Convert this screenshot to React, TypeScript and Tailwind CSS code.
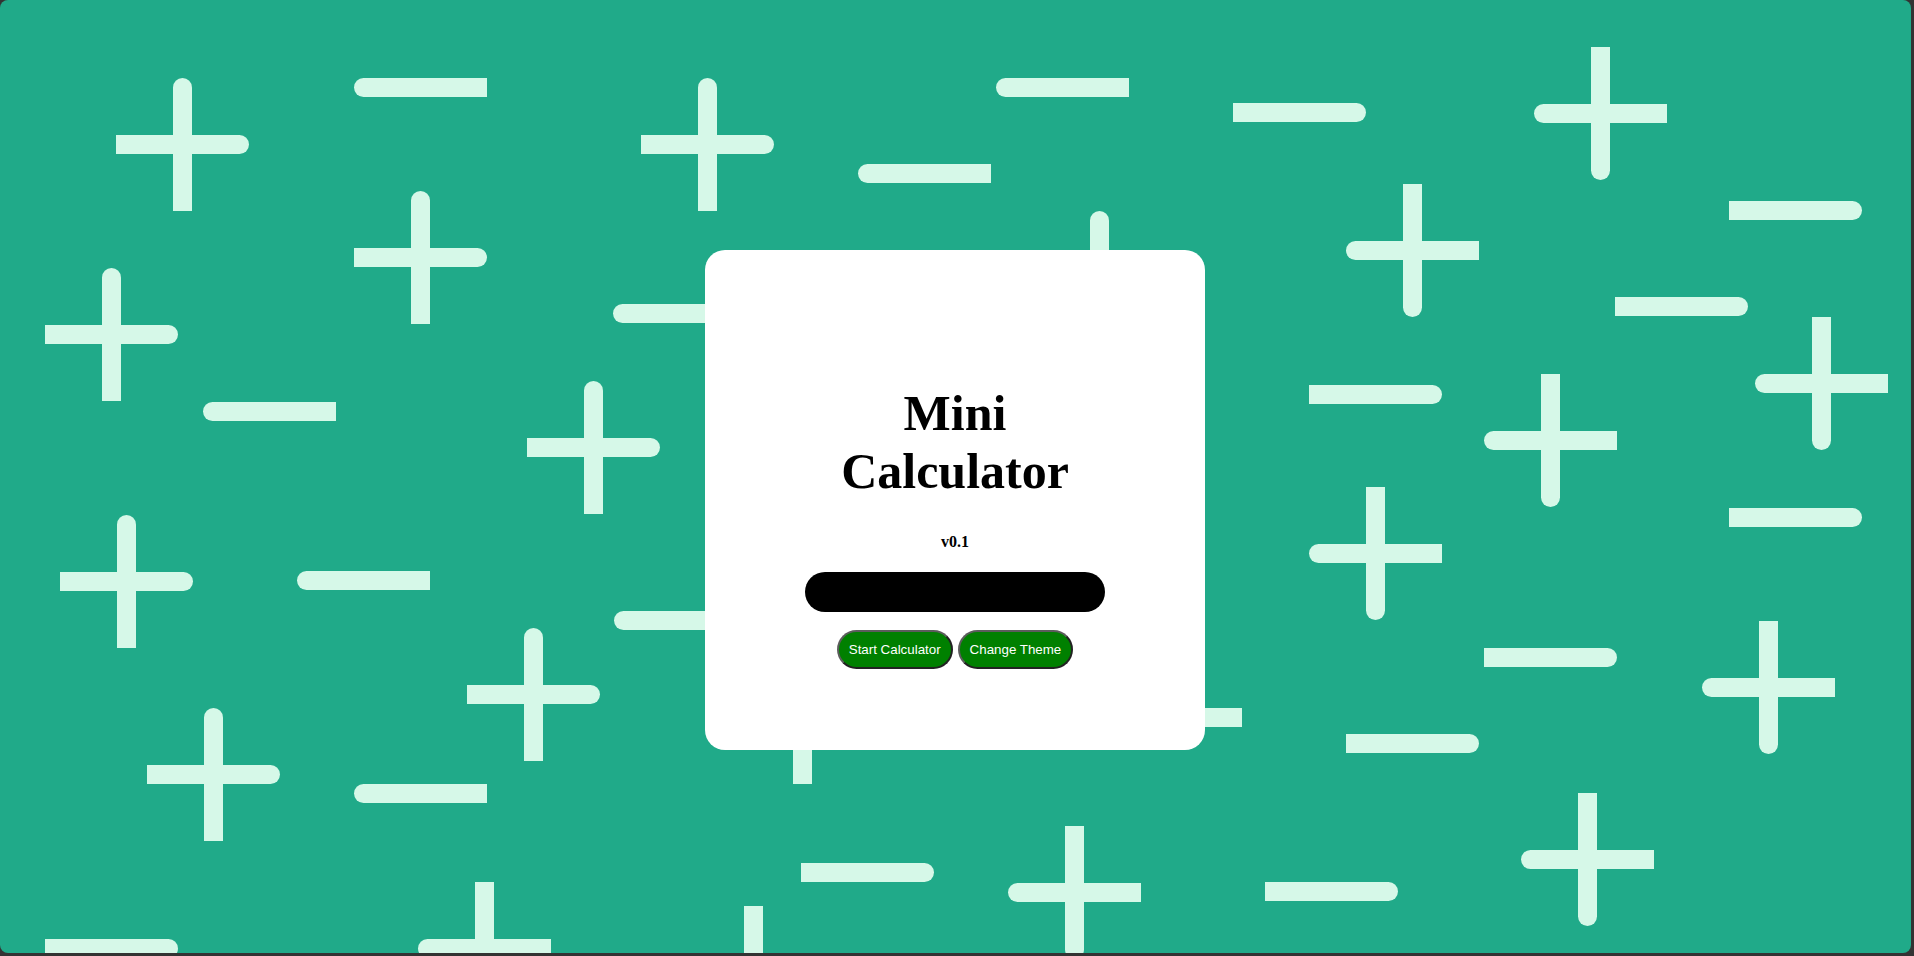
import React from 'react';

type Pt = [number, number];

// symbol positions (top-left of each glyph box), two orientations of the pattern
const plusA: Pt[] = [[116, 78], [354, 191], [45, 268], [641, 78], [1033, 211], [527, 381], [60, 515], [467, 628], [147, 708], [736, 651]];
const minusA: Pt[] = [[354, 78], [203, 402], [996, 78], [858, 164], [613, 304], [297, 571], [614, 611], [354, 784], [1109, 708]];
const plusB: Pt[] = [[418, 882], [1008, 826], [687, 906], [1534, 47], [1346, 184], [1484, 374], [1755, 317], [1309, 487], [1702, 621], [1521, 793]];
const minusB: Pt[] = [[45, 939], [801, 863], [1265, 882], [1233, 103], [1729, 201], [1615, 297], [1309, 385], [1729, 508], [1484, 648], [1346, 734]];

const S = 133;
const T = 19;
const R = 9.5;

const Pattern = () => (
  <svg className="absolute inset-0" width="1911" height="953" viewBox="0 0 1911 953" fill="#d6f8e8">
    {plusA.map(([x, y], i) => (
      <g key={'pa' + i}>
        <rect x={x + 57} y={y} width={T} height={S} rx={R} />
        <rect x={x + 57} y={y + 66} width={T} height={67} />
        <rect x={x} y={y + 57} width={S} height={T} rx={R} />
        <rect x={x} y={y + 57} width={67} height={T} />
      </g>
    ))}
    {plusB.map(([x, y], i) => (
      <g key={'pb' + i}>
        <rect x={x + 57} y={y} width={T} height={S} rx={R} />
        <rect x={x + 57} y={y} width={T} height={67} />
        <rect x={x} y={y + 57} width={S} height={T} rx={R} />
        <rect x={x + 66} y={y + 57} width={67} height={T} />
      </g>
    ))}
    {minusA.map(([x, y], i) => (
      <g key={'ma' + i}>
        <rect x={x} y={y} width={S} height={T} rx={R} />
        <rect x={x + 66} y={y} width={67} height={T} />
      </g>
    ))}
    {minusB.map(([x, y], i) => (
      <g key={'mb' + i}>
        <rect x={x} y={y} width={S} height={T} rx={R} />
        <rect x={x} y={y} width={67} height={T} />
      </g>
    ))}
  </svg>
);

const App = () => {
  return (
    <div className="w-[1914px] h-[956px] bg-[#333]">
      <div className="relative w-[1911px] h-[953px] rounded-lg overflow-hidden bg-[#20aa89] flex justify-center pt-[250px] pr-[1px]">
        <Pattern />

        {/* Card */}
        <div className="relative w-[500px] h-[500px] bg-white rounded-[20px] flex flex-col items-center pt-[134px] font-['Liberation_Serif',serif] text-black">
          <h1 className="w-[300px] text-center text-[50px] font-bold leading-[normal]">Mini Calculator</h1>
          <h4 className="mt-[33px] text-[16px] font-bold leading-[normal]">v0.1</h4>
          <input type="text" className="mt-[21px] w-[300px] h-[40px] rounded-full bg-black border-0 outline-none" />
          <div className="mt-[18px] flex gap-[5px] font-['Liberation_Sans',Arial,sans-serif]">
            <button className="px-[10px] py-[10px] rounded-full bg-[#008000] text-white text-[13.333px] leading-[normal] border-2 border-t-[#5c5c5c] border-l-[#5c5c5c] border-b-[#222] border-r-[#222]">
              Start Calculator
            </button>
            <button className="px-[10px] py-[10px] rounded-full bg-[#008000] text-white text-[13.333px] leading-[normal] border-2 border-t-[#5c5c5c] border-l-[#5c5c5c] border-b-[#222] border-r-[#222]">
              Change Theme
            </button>
          </div>
        </div>
      </div>
    </div>
  );
};

export default App;
